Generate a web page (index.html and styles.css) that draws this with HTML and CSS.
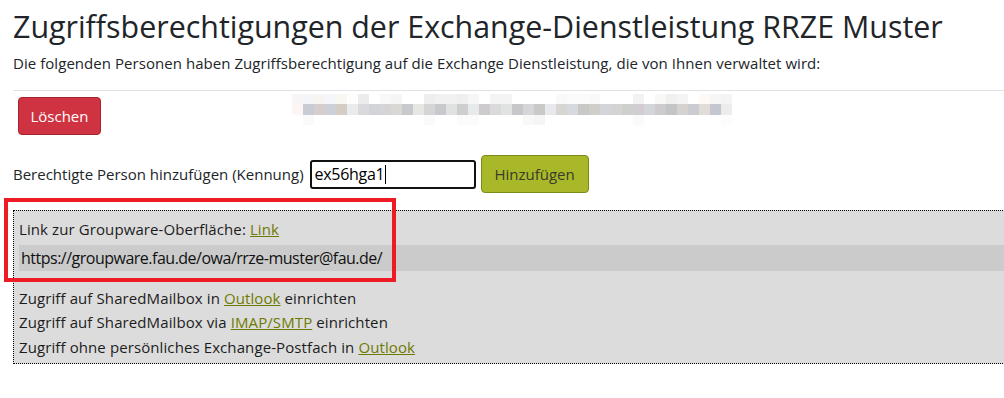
FILE: index.html
```html
<!DOCTYPE html>
<html lang="de">
<head>
<meta charset="utf-8">
<title>Zugriffsberechtigungen</title>
<link rel="stylesheet" href="styles.css">
</head>
<body>
<div class="page">
  <h1 class="title">Zugriffsberechtigungen der Exchange-Dienstleistung RRZE Muster</h1>
  <p class="lead">Die folgenden Personen haben Zugriffsberechtigung auf die Exchange Dienstleistung, die von Ihnen verwaltet wird:</p>
  <hr class="rule">
  <div class="person-row">
    <button class="btn btn-danger">Löschen</button>
    <div class="blurred" aria-hidden="true">
      <div class="blur-row faint">
        <span style="background:#f9f5f4"></span><span style="background:#f3f5f8"></span><span style="background:#f7f4f1"></span><span style="background:#f4f6f9"></span><span style="background:#f8f7f2"></span><span style="background:#fdfdfd"></span><span style="background:#ececec"></span><span></span><span style="background:#f8f8f8"></span><span style="background:#f5f5f5"></span><span></span><span></span><span style="background:#eeeeec"></span><span style="background:#f1f1f1"></span><span style="background:#f1f1f1"></span><span style="background:#eef0ef"></span><span style="background:#f6f6f6"></span><span></span><span style="background:#f4f4f4"></span><span style="background:#f4f4f4"></span><span></span><span></span><span></span><span></span><span style="background:#f9f9f9"></span><span style="background:#fbfbfb"></span><span style="background:#fbfbfb"></span><span style="background:#f9f9f9"></span><span></span><span></span><span></span><span style="background:#f2f2f2"></span><span></span><span style="background:#f8f8f6"></span><span style="background:#f0f0f0"></span><span style="background:#f4f4f4"></span><span></span><span style="background:#fcf9f7"></span><span style="background:#f6f6f6"></span><span style="background:#f4f4f4"></span>
      </div>
      <div class="blur-row">
        <span style="background:#fbf5f3"></span><span style="background:#c9ccd2"></span><span style="background:#d4cfcd"></span><span style="background:#cdd0d8"></span><span style="background:#d4cdc6"></span><span style="background:#e9ecea"></span><span style="background:#d9d9de"></span><span style="background:#d3d4d8"></span><span style="background:#d5d5d7"></span><span style="background:#d9d8d4"></span><span style="background:#c8c9cc"></span><span style="background:#e6e6e3"></span><span style="background:#d4d6d5"></span><span style="background:#c8c9cc"></span><span style="background:#e0e1e3"></span><span style="background:#cfcecf"></span><span style="background:#e6eaeb"></span><span style="background:#cdcbcd"></span><span style="background:#dadada"></span><span style="background:#e1e3e2"></span><span style="background:#c7c7c9"></span><span style="background:#d5d6d9"></span><span style="background:#c9c9c7"></span><span style="background:#e8e9ed"></span><span style="background:#d8d6d3"></span><span style="background:#d6d9de"></span><span style="background:#c8c8c6"></span><span style="background:#cfcecb"></span><span style="background:#d2d6d9"></span><span style="background:#d3d4d3"></span><span style="background:#cdd0cd"></span><span style="background:#d2cdd2"></span><span style="background:#d4d5db"></span><span style="background:#cecbce"></span><span style="background:#c3c4c6"></span><span style="background:#d5d2d0"></span><span style="background:#cbccd2"></span><span style="background:#e0dcd7"></span><span style="background:#c4c7d0"></span><span style="background:#ececec"></span>
      </div>
      <div class="blur-row faint">
        <span></span><span style="background:#fafafa"></span><span></span><span></span><span></span><span></span><span></span><span></span><span></span><span></span><span></span><span></span><span style="background:#fafafa"></span><span></span><span></span><span style="background:#fbfbfb"></span><span style="background:#fbfbfb"></span><span></span><span></span><span></span><span></span><span style="background:#f8f8f8"></span><span style="background:#f5f5f5"></span><span></span><span></span><span></span><span></span><span></span><span></span><span></span><span></span><span style="background:#fafafa"></span><span></span><span></span><span></span><span></span><span></span><span></span><span></span><span style="background:#fcfcfc"></span>
      </div>
    </div>
  </div>
  <form class="add-form">
    <label class="add-label" for="kennung">Berechtigte Person hinzufügen (Kennung)</label>
    <div class="input-box"><span class="input-value">ex56hga1</span><span class="caret"></span></div>
    <button type="button" class="btn btn-olive">Hinzufügen</button>
  </form>
  <div class="info-wrap">
    <div class="info-box">
      <div class="info-line">Link zur Groupware-Oberfläche: <a href="#" class="olive-link">Link</a></div>
      <div class="url-strip">https://groupware.fau.de/owa/rrze-muster@fau.de/</div>
      <div class="info-list">
        <div class="info-line">Zugriff auf SharedMailbox in <a href="#" class="olive-link">Outlook</a> einrichten</div>
        <div class="info-line">Zugriff auf SharedMailbox via <a href="#" class="olive-link">IMAP/SMTP</a> einrichten</div>
        <div class="info-line">Zugriff ohne persönliches Exchange-Postfach in <a href="#" class="olive-link">Outlook</a></div>
      </div>
    </div>
    <div class="highlight-frame"></div>
  </div>
</div>
</body>
</html>
```

FILE: styles.css
```css
html, body {
  margin: 0;
  padding: 0;
  background: #ffffff;
  overflow: hidden;
}

body {
  font-family: "Open Sans", "Noto Sans", sans-serif;
  color: #212529;
  width: 1004px;
  height: 398px;
}

.page {
  padding: 0 0 0 13px;
}

.title {
  margin: 0;
  padding-top: 6px;
  font-size: 30.4px;
  line-height: 42px;
  font-weight: 400;
  letter-spacing: 0;
  color: #212529;
  white-space: nowrap;
}

.lead {
  margin: 5px 0 0 0;
  font-size: 15px;
  line-height: 20px;
  letter-spacing: 0.05px;
  white-space: nowrap;
}

.rule {
  margin: 17px 0 0 0;
  border: 0;
  border-top: 1px solid #e1e0e6;
  height: 0;
}

.person-row {
  display: flex;
  align-items: flex-start;
  margin-top: 6px;
}

.btn {
  font-family: inherit;
  font-size: 15px;
  border-radius: 4px;
  cursor: pointer;
}

.btn-danger {
  margin-left: 5px;
  width: 83px;
  height: 38px;
  background: #cf3341;
  border: 1px solid #a42430;
  color: #ffffff;
  padding: 0;
}

.blurred {
  margin-left: 191px;
  margin-top: -3px;
  display: flex;
  flex-direction: column;
}

.blur-row {
  display: flex;
  height: 11px;
}

.blur-row span {
  display: block;
  width: 11px;
  height: 11px;
  background: #ffffff;
}

.blur-row.faint {
  height: 10px;
}

.blur-row.faint span {
  height: 10px;
}

.add-form {
  display: flex;
  align-items: center;
  margin: 20px 0 0 0;
}

.add-label {
  font-size: 15px;
  letter-spacing: 0;
  margin-right: 6px;
}

.input-box {
  width: 159px;
  height: 25px;
  border: 2px solid #111111;
  border-radius: 3px;
  display: flex;
  align-items: center;
  padding-left: 3px;
  font-size: 16px;
  letter-spacing: -0.3px;
  color: #000000;
}

.caret {
  display: inline-block;
  width: 1px;
  height: 19px;
  background: #000;
  margin-left: 1px;
}

.btn-olive {
  margin-left: 5px;
  width: 108px;
  height: 38px;
  background: #a9b828;
  border: 1px solid #7d8a1c;
  color: #3a3a2e;
  padding: 0;
}

.info-wrap {
  position: relative;
  margin-top: 17px;
}

.info-box {
  width: 1010px;
  background: #dcdcdc;
  border: 1px dotted #000000;
  border-right: 0;
  padding: 6px 0 4px 5px;
  font-size: 15px;
  letter-spacing: 0.1px;
  color: #1c1c1c;
}

.info-line {
  line-height: 24.5px;
}

.url-strip {
  margin-top: 3px;
  background: #cbcbcb;
  height: 26px;
  line-height: 26px;
  padding-left: 2px;
  font-size: 16px;
  letter-spacing: -0.5px;
  color: #111111;
}

.info-list {
  margin-top: 15px;
}

.olive-link {
  color: #6f7a00;
  text-decoration: underline;
}

.highlight-frame {
  position: absolute;
  left: -9px;
  top: -12px;
  width: 384px;
  height: 76px;
  border: 4px solid #ed1c24;
  pointer-events: none;
}
```
